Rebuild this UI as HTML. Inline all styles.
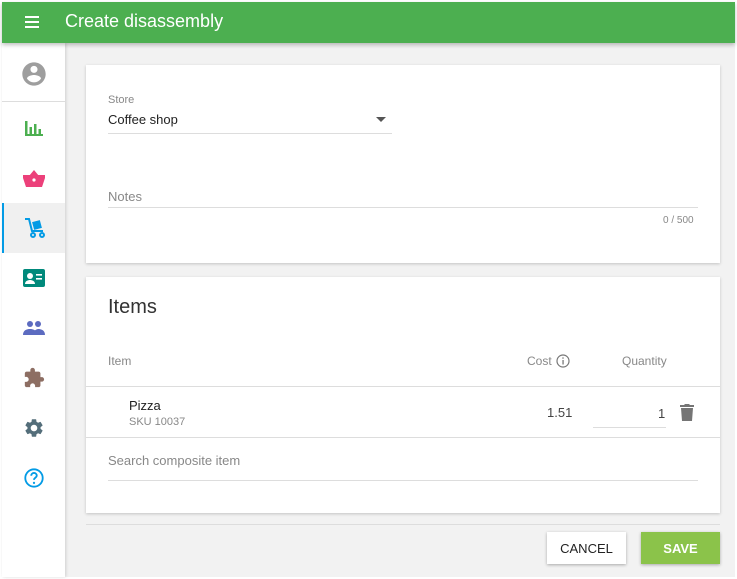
<!DOCTYPE html>
<html><head><style>
*{box-sizing:border-box;margin:0;padding:0}
body{width:737px;height:579px;background:#fff;font-family:"Liberation Sans",sans-serif;position:relative;overflow:hidden}
.frame{position:absolute;left:2px;top:2px;width:733px;height:575px;background:#f2f2f2}
.hdr{position:absolute;left:0;top:0;width:733px;height:41px;background:#4caf50;box-shadow:0 2px 4px rgba(0,0,0,.25);z-index:2}
.hdr .t{position:absolute;left:63px;top:9px;color:#fff;font-size:18px}
.side{position:absolute;left:0;top:41px;width:63px;height:534px;background:#fff;box-shadow:1px 0 3px rgba(0,0,0,.15)}
.ic{position:absolute;left:0;width:63px;height:50px;display:flex;align-items:center;justify-content:center}
.card{position:absolute;left:84px;width:634px;background:#fff;box-shadow:0 1px 3px rgba(0,0,0,.2)}
.lbl{position:absolute;font-size:13px;color:#888}
.txt{position:absolute;font-size:13px;color:#222}
.line{position:absolute;height:1px;background:#ddd}
.btn{position:absolute;top:530px;height:32px;width:79px;font-size:13px;font-weight:bold;display:flex;align-items:center;justify-content:center;box-shadow:0 1px 3px rgba(0,0,0,.3)}
</style></head><body><div class="frame">
<div class="hdr">
<svg style="position:absolute;left:23px;top:14px" width="14" height="12"><rect y="0" width="14" height="2" fill="#fff"/><rect y="5" width="14" height="2" fill="#fff"/><rect y="10" width="14" height="2" fill="#fff"/></svg>
<div class="t">Create disassembly</div></div>
<div class="side">
<div class="ic" style="top:4px;height:54px"><svg width="28" height="28" viewBox="0 0 24 24"><path fill="#9e9e9e" d="M12 2C6.48 2 2 6.48 2 12s4.48 10 10 10 10-4.48 10-10S17.52 2 12 2zm0 3c1.66 0 3 1.34 3 3s-1.34 3-3 3-3-1.34-3-3 1.34-3 3-3zm0 14.2c-2.5 0-4.710-1.28-6-3.220.03-1.99 4-3.08 6-3.08 1.99 0 5.97 1.09 6 3.08-1.29 1.94-3.5 3.22-6 3.22z"/></svg></div>
<div class="line" style="left:0;top:58px;width:63px"></div>
<div class="ic" style="top:60px"><svg width="18" height="16" viewBox="0 0 18 16"><g fill="#4caf50"><rect x="0" y="1" width="2.5" height="15"/><rect x="4.5" y="7" width="2.5" height="9"/><rect x="9" y="4" width="2.5" height="12"/><rect x="13.5" y="9" width="2.5" height="7"/><rect x="0" y="14" width="18" height="2"/></g></svg></div>
<div class="ic" style="top:110px"><svg width="22" height="20" viewBox="0 0 22 20"><path fill="#ec407a" d="M6 8L11 2l5 6zM0 7h22v3l-3 9H3L0 10z"/><circle cx="11" cy="12" r="1.6" fill="#fff"/></svg></div>
<div class="ic" style="top:160px;background:#f0f0f0;border-left:2px solid #039be5"><svg width="22" height="22" viewBox="0 0 22 22"><g fill="none" stroke="#039be5" stroke-width="2"><path d="M1 2h4l3 12h11"/><circle cx="9" cy="18" r="2"/><circle cx="18" cy="18" r="2"/></g><rect x="9" y="4" width="8" height="8" fill="#039be5" transform="rotate(-15 13 8)"/></svg></div>
<div class="ic" style="top:210px"><svg width="22" height="18" viewBox="0 0 22 18"><rect width="22" height="18" rx="2" fill="#00897b"/><circle cx="7" cy="7" r="3" fill="#fff"/><path d="M2 15c0-3 3-4 5-4s5 1 5 4z" fill="#fff"/><rect x="13" y="5" width="6" height="1.6" fill="#fff"/><rect x="13" y="9" width="6" height="1.6" fill="#fff"/></svg></div>
<div class="ic" style="top:260px"><svg width="22" height="14" viewBox="0 0 22 14"><g fill="#5c6bc0"><circle cx="7" cy="3" r="3"/><circle cx="15" cy="3" r="3"/><path d="M0 14c0-5 4-6 7-6s7 1 7 6zM10 14c0-3 1-5 5-6 3 0 7 1 7 6z"/></g></svg></div>
<div class="ic" style="top:310px"><svg width="22" height="22" viewBox="0 0 24 24"><path fill="#8d6e63" d="M20.5 11H19V7c0-1.1-.9-2-2-2h-4V3.5C13 2.12 11.88 1 10.5 1S8 2.12 8 3.5V5H4c-1.1 0-2 .9-2 2v3.8h1.5c1.49 0 2.7 1.21 2.7 2.7s-1.21 2.7-2.7 2.7H2V20c0 1.1.9 2 2 2h3.8v-1.5c0-1.49 1.21-2.7 2.7-2.7s2.7 1.21 2.7 2.7V22H17c1.1 0 2-.9 2-2v-4h1.5c1.38 0 2.5-1.12 2.5-2.5S21.88 11 20.5 11z"/></svg></div>
<div class="ic" style="top:360px"><svg width="22" height="22" viewBox="0 0 24 24"><path fill="#546e7a" d="M19.14 12.94c.04-.3.06-.61.06-.94 0-.32-.02-.64-.07-.94l2.03-1.58a.49.49 0 00.12-.61l-1.92-3.32a.488.488 0 00-.59-.22l-2.39.96c-.5-.38-1.03-.7-1.62-.94l-.36-2.54a.484.484 0 00-.48-.41h-3.840c-.24 0-.43.17-.47.41l-.36 2.54c-.59.24-1.130.57-1.62.94l-2.39-.96c-.22-.08-.47 0-.59.22L2.74 8.87c-.12.21-.08.47.12.61l2.03 1.58c-.05.3-.09.63-.09.94s.02.64.07.94l-2.03 1.58a.49.49 0 00-.12.61l1.92 3.32c.12.22.37.29.59.22l2.39-.96c.5.38 1.03.7 1.62.94l.36 2.54c.05.24.24.41.48.41h3.84c.24 0 .44-.17.47-.41l.36-2.54c.59-.24 1.13-.56 1.62-.94l2.39.96c.22.08.47 0 .59-.22l1.92-3.32c.12-.22.07-.47-.12-.61l-2.01-1.58zM12 15.6c-1.98 0-3.6-1.62-3.6-3.6s1.62-3.6 3.6-3.6 3.6 1.62 3.6 3.6-1.62 3.6-3.6 3.6z"/></svg></div>
<div class="ic" style="top:410px"><svg width="22" height="22" viewBox="0 0 24 24"><circle cx="12" cy="12" r="9.5" fill="none" stroke="#039be5" stroke-width="2"/><path d="M9 9.5a3 3 0 116 0c0 2-3 2.2-3 4.5" fill="none" stroke="#039be5" stroke-width="2"/><circle cx="12" cy="17.3" r="1.2" fill="#039be5"/></svg></div>
</div>
<div class="card" style="top:63px;height:198px">
<div class="lbl" style="left:22px;top:29px;font-size:11px">Store</div>
<div class="txt" style="left:22px;top:47px">Coffee shop</div>
<svg style="position:absolute;left:290px;top:52px" width="10" height="5"><path d="M0 0h10L5 5z" fill="#555"/></svg>
<div class="line" style="left:22px;top:68px;width:284px"></div>
<div class="lbl" style="left:22px;top:124px">Notes</div>
<div class="line" style="left:22px;top:142px;width:590px"></div>
<div class="lbl" style="left:577px;top:150px;font-size:10px">0 / 500</div>
</div>
<div class="card" style="top:275px;height:236px">
<div class="txt" style="left:22px;top:19px;font-size:20px;color:#333">Items</div>
<div class="lbl" style="left:22px;top:77px;font-size:12px">Item</div>
<div class="lbl" style="left:441px;top:77px;font-size:12px">Cost</div>
<svg style="position:absolute;left:470px;top:77px" width="14" height="14"><circle cx="7" cy="7" r="6" fill="none" stroke="#777" stroke-width="1.2"/><rect x="6.4" y="6" width="1.3" height="4.5" fill="#777"/><circle cx="7" cy="4" r=".8" fill="#777"/></svg>
<div class="lbl" style="left:536px;top:77px;font-size:12px">Quantity</div>
<div class="line" style="left:0;top:109px;width:634px"></div>
<div class="txt" style="left:43px;top:121px">Pizza</div>
<div class="lbl" style="left:43px;top:139px;font-size:11px">SKU 10037</div>
<div class="txt" style="left:461px;top:128px;color:#444">1.51</div>
<div class="txt" style="left:572px;top:129px;color:#444">1</div>
<div class="line" style="left:507px;top:150px;width:73px"></div>
<svg style="position:absolute;left:594px;top:127px" width="14" height="17" viewBox="0 0 14 17"><path fill="#757575" d="M1 4h12l-1 13H2zM0 1h4l1-1h4l1 1h4v2H0z"/></svg>
<div class="line" style="left:0;top:160px;width:634px"></div>
<div class="lbl" style="left:22px;top:176px">Search composite item</div>
<div class="line" style="left:22px;top:203px;width:590px"></div>
</div>
<div class="line" style="left:84px;top:522px;width:634px"></div>
<div class="btn" style="left:545px;background:#fff;color:#222;font-weight:normal">CANCEL</div>
<div class="btn" style="left:639px;background:#8bc34a;color:#fff">SAVE</div>
</div></body></html>
